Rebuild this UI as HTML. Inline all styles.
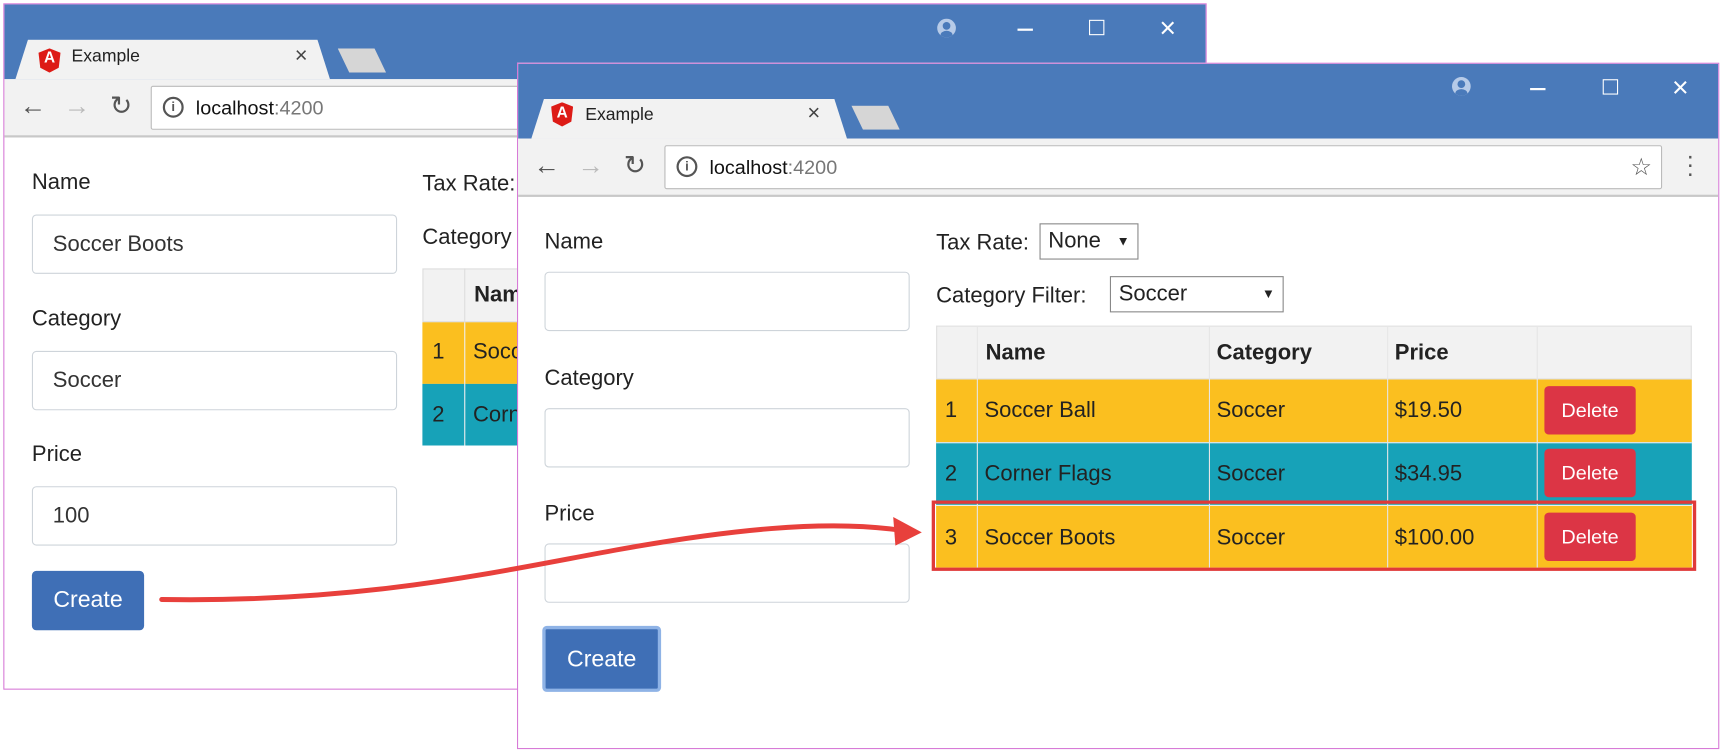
<!DOCTYPE html>
<html><head><meta charset="utf-8"><style>
*{box-sizing:border-box;margin:0;padding:0}
html,body{width:1725px;height:752px;overflow:hidden;background:#fff}
#s{position:absolute;left:0;top:0;width:1568px;height:684px;transform:scale(1.1);transform-origin:0 0;font-family:"Liberation Sans",sans-serif;color:#222}
.a{position:absolute}
.win{position:absolute;background:#fff;border:1.5px solid #d77bd7;overflow:hidden}
.title{position:absolute;left:0;right:0;top:0;height:68px;background:#4a7aba}
.tab{position:absolute;top:32px;height:36px;background:#f2f2f2;clip-path:polygon(4% 0,96% 0,100% 100%,0 100%);border-radius:6px 6px 0 0}
.tab2{position:absolute;width:44px;height:22px;background:#d6d6d6;clip-path:polygon(0 0,76% 0,100% 100%,24% 100%)}
.tb{position:absolute;left:0;right:0;top:68px;height:53px;background:#f2f2f2;border-bottom:2px solid #c8c8c8}
.addr{position:absolute;top:6px;height:40px;background:#fff;border:1px solid #bbb;border-radius:2px;font-size:18px;line-height:38px;padding-left:40px;color:#111}
.lbl{position:absolute;font-size:20px;color:#222}
.inp{position:absolute;width:332px;height:54px;border:1px solid #ced4da;border-radius:4px;font-size:20px;line-height:52px;padding-left:18px;color:#333}
.btn{position:absolute;background:#3f6fb6;color:#fff;font-size:21px;border-radius:4px;text-align:center}
.del{position:absolute;width:83px;height:44px;background:#dc3545;color:#fff;border-radius:4px;font-size:18px;line-height:44px;text-align:center}
.sel{position:absolute;height:33px;border:1px solid #888;background:#fff;font-size:20px;line-height:31px;padding-left:7px}
.ctl{position:absolute;color:#fff;font-size:20px}
.usr{position:absolute;width:17px;height:17px;border-radius:50%;background:#b7cbe8;overflow:hidden}
.usr:before{content:"";position:absolute;left:5px;top:3px;width:7px;height:7px;border-radius:50%;background:#4a7aba}
.usr:after{content:"";position:absolute;left:3px;top:11px;width:11px;height:8px;border-radius:50% 50% 0 0;background:#4a7aba}
</style></head><body><div id="s">

<!-- BACK WINDOW -->
<div class="win" style="left:3px;top:3px;width:1094px;height:624px">
 <div class="title"></div>
 <div class="tab" style="left:10px;width:286px"></div>
 <div class="a" style="left:31px;top:40px;width:20px;height:22px;background:#dd1b16;clip-path:polygon(50% 0,100% 18%,92% 80%,50% 100%,8% 80%,0 18%)"></div>
 <div class="a" style="left:36px;top:40px;color:#fff;font-size:14px;font-weight:bold">A</div>
 <div class="a" style="left:61px;top:39px;font-size:16px">Example</div>
 <div class="a" style="left:264px;top:36px;font-size:20px;color:#444">×</div>
 <div class="tab2" style="left:303px;top:40px"></div>
 <div class="usr" style="left:848px;top:13px"></div>
 <div class="a" style="left:921px;top:22px;width:14px;height:1.5px;background:#fff"></div>
 <div class="a" style="left:986px;top:14px;width:14px;height:14px;border:1.5px solid #fff"></div>
 <div class="ctl" style="left:1050px;top:6px;font-size:26px">×</div>
 <div class="tb">
  <div class="a" style="left:14px;top:11px;font-size:24px;color:#555">&#8592;</div>
  <div class="a" style="left:54px;top:11px;font-size:24px;color:#bbb">&#8594;</div>
  <div class="a" style="left:96px;top:10px;font-size:24px;color:#555">&#8635;</div>
  <div class="addr" style="left:133px;width:1000px"><span style="position:absolute;left:10px;top:9px;width:19px;height:19px;border:2px solid #555;border-radius:50%;font-size:12px;line-height:15px;text-align:center;font-weight:bold;color:#555">i</span>localhost<span style="color:#777">:4200</span></div>
 </div>
 <div class="lbl" style="left:25px;top:151px">Name</div>
 <div class="inp" style="left:25px;top:191px">Soccer Boots</div>
 <div class="lbl" style="left:25px;top:275px">Category</div>
 <div class="inp" style="left:25px;top:315px">Soccer</div>
 <div class="lbl" style="left:25px;top:398px">Price</div>
 <div class="inp" style="left:25px;top:438px">100</div>
 <div class="btn" style="left:25px;top:515px;width:102px;height:54px;line-height:54px">Create</div>
 <div class="lbl" style="left:380px;top:152px">Tax Rate:</div>
 <div class="lbl" style="left:380px;top:201px">Category</div>
 <div class="a" style="left:380px;top:240px;width:120px;height:49px;background:#f2f2f2;border:1px solid #ddd"></div>
 <div class="a" style="left:418px;top:240px;width:1px;height:161px;background:#ddd"></div>
 <div class="a" style="left:427px;top:253px;font-size:20px;font-weight:bold">Name</div>
 <div class="a" style="left:380px;top:289px;width:120px;height:56px;background:#fbbf1f"></div>
 <div class="a" style="left:380px;top:345px;width:120px;height:56px;background:#17a2b8"></div>
 <div class="a" style="left:418px;top:289px;width:1px;height:112px;background:#eee"></div>
 <div class="a" style="left:389px;top:305px;font-size:20px">1</div>
 <div class="a" style="left:426px;top:305px;font-size:20px">Soccer</div>
 <div class="a" style="left:389px;top:362px;font-size:20px">2</div>
 <div class="a" style="left:426px;top:362px;font-size:20px">Corner</div>
</div>

<!-- FRONT WINDOW -->
<div class="win" style="left:470px;top:57px;width:1093px;height:624px">
 <div class="title"></div>
 <div class="tab" style="left:12px;width:287px"></div>
 <div class="a" style="left:30px;top:35px;width:20px;height:22px;background:#dd1b16;clip-path:polygon(50% 0,100% 18%,92% 80%,50% 100%,8% 80%,0 18%)"></div>
 <div class="a" style="left:35px;top:36px;color:#fff;font-size:14px;font-weight:bold">A</div>
 <div class="a" style="left:61px;top:38px;font-size:16px">Example</div>
 <div class="a" style="left:263px;top:34px;font-size:20px;color:#444">×</div>
 <div class="tab2" style="left:303px;top:38px"></div>
 <div class="usr" style="left:849px;top:12px"></div>
 <div class="a" style="left:920px;top:22px;width:14px;height:1.5px;background:#fff"></div>
 <div class="a" style="left:986px;top:14px;width:14px;height:14px;border:1.5px solid #fff"></div>
 <div class="ctl" style="left:1049px;top:6px;font-size:26px">×</div>
 <div class="tb">
  <div class="a" style="left:14px;top:11px;font-size:24px;color:#555">&#8592;</div>
  <div class="a" style="left:54px;top:11px;font-size:24px;color:#bbb">&#8594;</div>
  <div class="a" style="left:96px;top:10px;font-size:24px;color:#555">&#8635;</div>
  <div class="addr" style="left:133px;width:907px"><span style="position:absolute;left:10px;top:9px;width:19px;height:19px;border:2px solid #555;border-radius:50%;font-size:12px;line-height:15px;text-align:center;font-weight:bold;color:#555">i</span>localhost<span style="color:#777">:4200</span><span style="position:absolute;right:8px;top:0;font-size:22px;color:#555">&#9734;</span></div>
  <div class="a" style="left:1062px;top:12px;font-size:22px;color:#555;line-height:8px">·<br>·<br>·</div>
 </div>
 <div class="lbl" style="left:24px;top:151px">Name</div>
 <div class="inp" style="left:24px;top:189px"></div>
 <div class="lbl" style="left:24px;top:275px">Category</div>
 <div class="inp" style="left:24px;top:313px"></div>
 <div class="lbl" style="left:24px;top:398px">Price</div>
 <div class="inp" style="left:24px;top:436px"></div>
 <div class="btn" style="left:22px;top:511px;width:108px;height:60px;line-height:56px;border:3px solid #8fb3e6">Create</div>
 <div class="lbl" style="left:380px;top:152px">Tax Rate:</div>
 <div class="sel" style="left:474px;top:145px;width:90px">None<span style="position:absolute;right:7px;font-size:12px">&#9660;</span></div>
 <div class="lbl" style="left:380px;top:200px">Category Filter:</div>
 <div class="sel" style="left:538px;top:193px;width:158px">Soccer<span style="position:absolute;right:7px;font-size:12px">&#9660;</span></div>
 <!-- table -->
 <div class="a" style="left:380px;top:238px;width:687px;height:49px;background:#f2f2f2;border:1px solid #e0e0e0"></div>
 <div class="a" style="left:380px;top:287px;width:687px;height:57px;background:#fbbf1f"></div>
 <div class="a" style="left:380px;top:344px;width:687px;height:57px;background:#17a2b8;border-top:1px solid #eee"></div>
 <div class="a" style="left:380px;top:401px;width:687px;height:57px;background:#fbbf1f;border-top:1px solid #eee"></div>
 <div class="a" style="left:417px;top:238px;width:1px;height:220px;background:#e6e6e6"></div>
 <div class="a" style="left:628px;top:238px;width:1px;height:220px;background:#e6e6e6"></div>
 <div class="a" style="left:790px;top:238px;width:1px;height:220px;background:#e6e6e6"></div>
 <div class="a" style="left:926px;top:238px;width:1px;height:220px;background:#e6e6e6"></div>
 <div class="a" style="left:425px;top:252px;font-size:20px;font-weight:bold">Name</div>
 <div class="a" style="left:635px;top:252px;font-size:20px;font-weight:bold">Category</div>
 <div class="a" style="left:797px;top:252px;font-size:20px;font-weight:bold">Price</div>
 <div class="a" style="left:388px;top:304px;font-size:20px">1</div>
 <div class="a" style="left:424px;top:304px;font-size:20px">Soccer Ball</div>
 <div class="a" style="left:635px;top:304px;font-size:20px">Soccer</div>
 <div class="a" style="left:797px;top:304px;font-size:20px">$19.50</div>
 <div class="del" style="left:933px;top:293px">Delete</div>
 <div class="a" style="left:388px;top:362px;font-size:20px">2</div>
 <div class="a" style="left:424px;top:362px;font-size:20px">Corner Flags</div>
 <div class="a" style="left:635px;top:362px;font-size:20px">Soccer</div>
 <div class="a" style="left:797px;top:362px;font-size:20px">$34.95</div>
 <div class="del" style="left:933px;top:350px">Delete</div>
 <div class="a" style="left:388px;top:420px;font-size:20px">3</div>
 <div class="a" style="left:424px;top:420px;font-size:20px">Soccer Boots</div>
 <div class="a" style="left:635px;top:420px;font-size:20px">Soccer</div>
 <div class="a" style="left:797px;top:420px;font-size:20px">$100.00</div>
 <div class="del" style="left:933px;top:408px">Delete</div>
 <div class="a" style="left:376px;top:397px;width:695px;height:64px;border:3px solid #e03a3a"></div>
</div>

<svg class="a" style="left:0;top:0" width="1568" height="684">
 <path d="M147,545 C330,548 450,520 560,500 C660,482 750,472 818,482" fill="none" stroke="#e8403c" stroke-width="4.5" stroke-linecap="round"/>
 <polygon points="838,484 812,470 814,496" fill="#e8403c"/>
</svg>
</div></body></html>
